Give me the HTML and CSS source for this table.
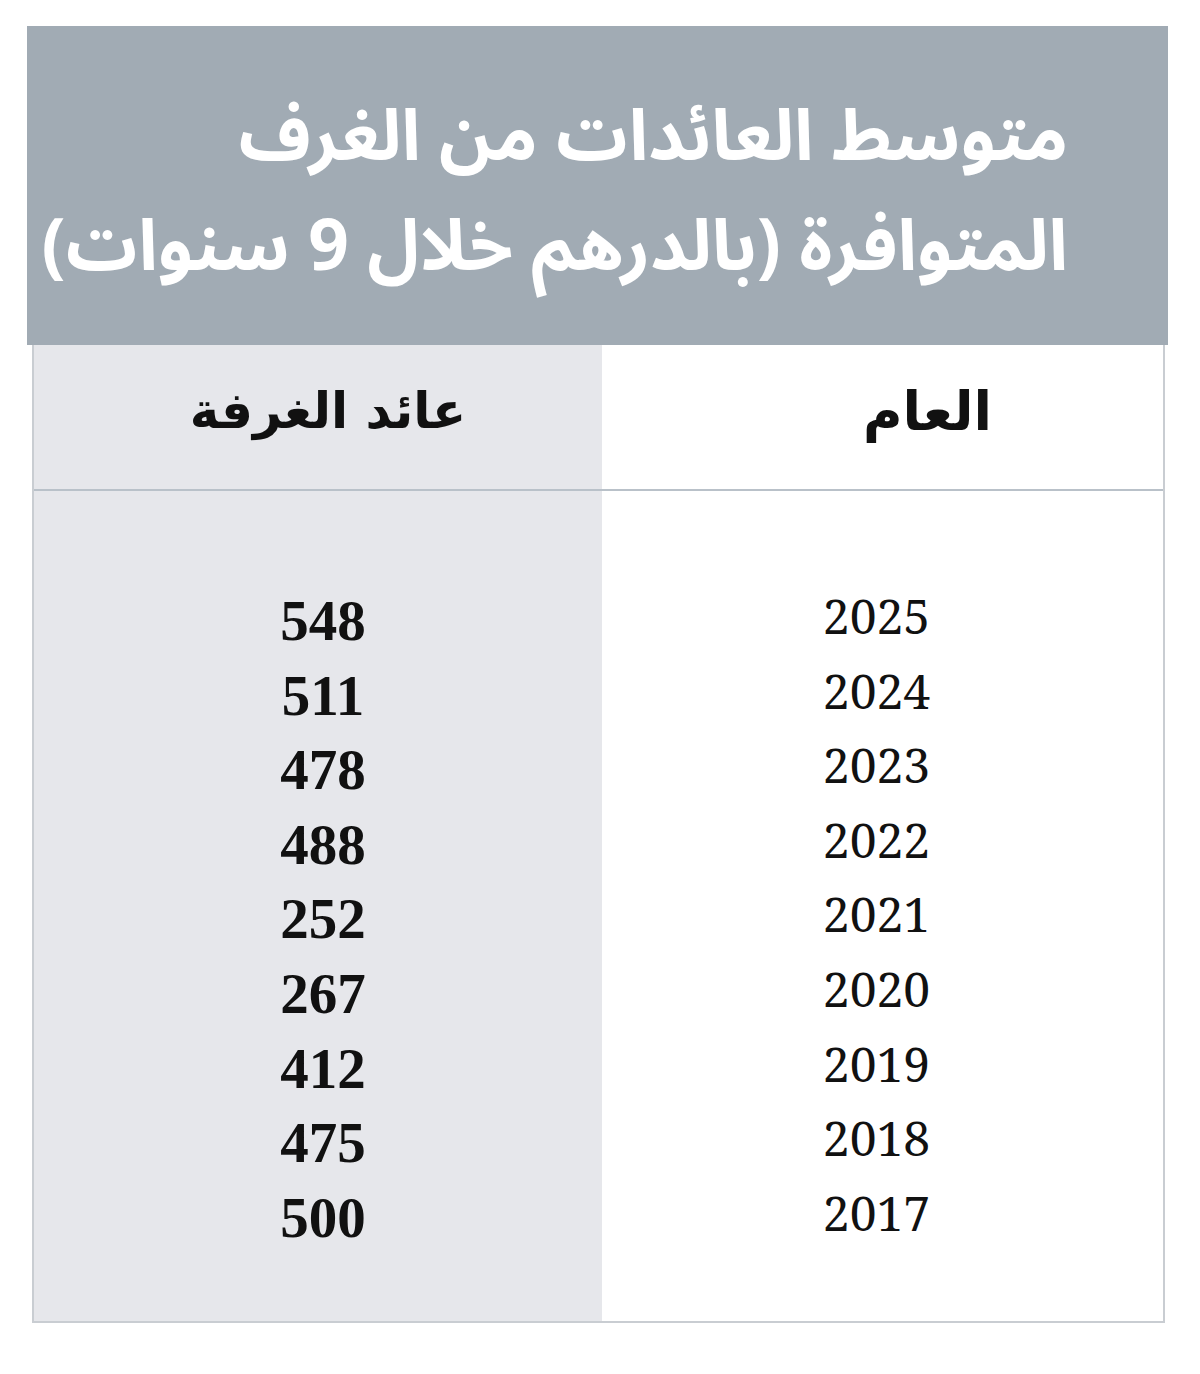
FILE: index.html
```html
<!DOCTYPE html>
<html lang="ar">
<head>
<meta charset="utf-8">
<link rel="stylesheet" href="styles.css">
</head>
<body>
<div class="card">
  <div class="title" dir="rtl">
    <div class="title-line">متوسط العائدات من الغرف</div>
    <div class="title-line">المتوافرة (بالدرهم خلال 9 سنوات)</div>
  </div>
  <div class="table" dir="rtl">
    <div class="col col-year">
      <div class="head"><span class="head-label label-year">العام</span></div>
      <div class="vals">
        <div class="val">2025</div>
        <div class="val">2024</div>
        <div class="val">2023</div>
        <div class="val">2022</div>
        <div class="val">2021</div>
        <div class="val">2020</div>
        <div class="val">2019</div>
        <div class="val">2018</div>
        <div class="val">2017</div>
      </div>
    </div>
    <div class="col col-rev">
      <div class="head"><span class="head-label label-rev">عائد الغرفة</span></div>
      <div class="vals">
        <div class="val">548</div>
        <div class="val">511</div>
        <div class="val">478</div>
        <div class="val">488</div>
        <div class="val">252</div>
        <div class="val">267</div>
        <div class="val">412</div>
        <div class="val">475</div>
        <div class="val">500</div>
      </div>
    </div>
  </div>
</div>
</body>
</html>
```
FILE: styles.css
```css
html, body {
  margin: 0;
  padding: 0;
  background: #ffffff;
}
.card {
  margin: 26px 0 0 27px;
  width: 1141px;
}
.title {
  background: #a1abb4;
  height: 319px;
  box-sizing: border-box;
  padding: 56px 100px 0 0;
  color: #ffffff;
  font-family: "Noto Sans Arabic", "Noto Kufi Arabic", "DejaVu Sans", sans-serif;
  font-weight: 700;
  font-size: 71px;
  text-align: right;
}
.title-line {
  line-height: 110px;
  height: 110px;
  white-space: nowrap;
}
.table {
  display: grid;
  grid-template-columns: 561px 568px;
  margin: 0 3px 0 5px;
  border: 2px solid #c9cdd2;
  border-top: none;
}
.col-year {
  background: #ffffff;
}
.col-rev {
  background: #e6e7eb;
}
.head {
  height: 146px;
  border-bottom: 2px solid #b9c1c9;
  display: flex;
  align-items: center;
  justify-content: center;
  box-sizing: border-box;
}
.head-label {
  font-family: "DejaVu Sans", "Noto Sans Arabic", sans-serif;
  font-weight: 700;
  font-size: 50px;
  color: #111111;
  position: relative;
  top: -6px;
}
.label-year {
  font-size: 54px;
  margin-left: 90px;
}
.label-rev {
  margin-left: 20px;
}
.vals {
  padding: 93px 0 66px;
}
.val {
  height: 74.6px;
  line-height: 74.6px;
  text-align: center;
  color: #111111;
}
.col-year .val {
  font-family: "Noto Serif", "Liberation Serif", serif;
  font-size: 48px;
  font-weight: 400;
  position: relative;
  top: -5px;
  padding-right: 12px;
}
.col-rev .val {
  font-family: "Liberation Serif", "Times New Roman", serif;
  font-size: 57px;
  font-weight: 700;
  padding-left: 10px;
}
```
